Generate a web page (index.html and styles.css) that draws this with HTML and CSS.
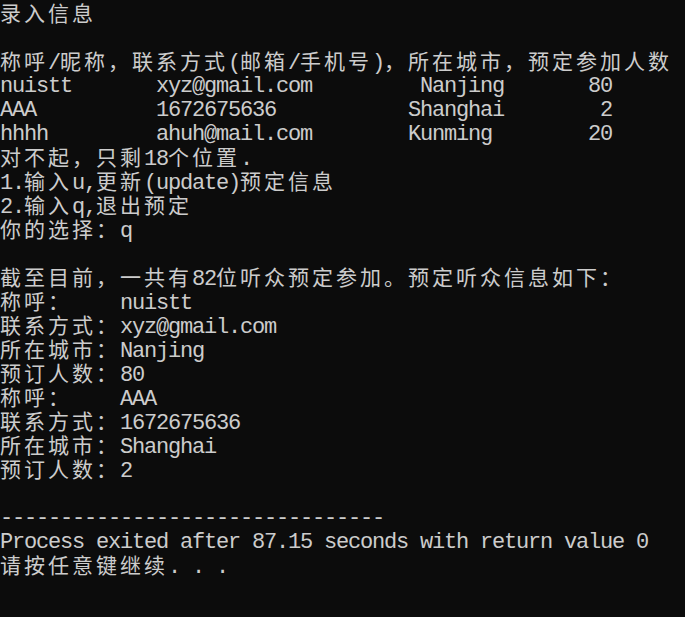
FILE: index.html
```html
<!DOCTYPE html>
<html lang="zh-CN">
<head>
<meta charset="utf-8">
<title>Console</title>
<link rel="stylesheet" href="styles.css">
</head>
<body>
<main class="console">
<div class="ln"><span class="c">录入信息</span></div>
<div class="ln"></div>
<div class="ln"><span class="c">称呼</span>/<span class="c">昵称，联系方式</span>(<span class="c">邮箱</span>/<span class="c">手机号</span>)<span class="c">，所在城市，预定参加人数</span></div>
<div class="ln">nuistt       xyz@gmail.com         Nanjing       80</div>
<div class="ln">AAA          1672675636           Shanghai        2</div>
<div class="ln">hhhh         ahuh@mail.com        Kunming        20</div>
<div class="ln"><span class="c">对不起，只剩</span>18<span class="c">个位置</span>.</div>
<div class="ln">1.<span class="c">输入</span>u,<span class="c">更新</span>(update)<span class="c">预定信息</span></div>
<div class="ln">2.<span class="c">输入</span>q,<span class="c">退出预定</span></div>
<div class="ln"><span class="c">你的选择：</span>q</div>
<div class="ln"></div>
<div class="ln"><span class="c">截至目前，一共有</span>82<span class="c">位听众预定参加。预定听众信息如下：</span></div>
<div class="ln"><span class="c">称呼：</span>    nuistt</div>
<div class="ln"><span class="c">联系方式：</span>xyz@gmail.com</div>
<div class="ln"><span class="c">所在城市：</span>Nanjing</div>
<div class="ln"><span class="c">预订人数：</span>80</div>
<div class="ln"><span class="c">称呼：</span>    AAA</div>
<div class="ln"><span class="c">联系方式：</span>1672675636</div>
<div class="ln"><span class="c">所在城市：</span>Shanghai</div>
<div class="ln"><span class="c">预订人数：</span>2</div>
<div class="ln"></div>
<div class="ln">--------------------------------</div>
<div class="ln">Process exited after 87.15 seconds with return value 0</div>
<div class="ln"><span class="c">请按任意键继续</span>. . .</div>
</main>
</body>
</html>
```
FILE: styles.css
```css
html, body {
  margin: 0;
  padding: 0;
  background: #0c0c0c;
}
body {
  width: 685px;
  height: 617px;
  overflow: hidden;
}
.console {
  display: flex;
  flex-direction: column;
  color: #cccccc;
  font-family: "Liberation Mono", monospace;
  font-size: 22px;
  letter-spacing: -1.2px;
}
.ln {
  height: 24px;
  line-height: 24px;
  white-space: pre;
  box-sizing: border-box;
  padding-top: 3px;
}
.c {
  font-family: "Noto Sans CJK SC", sans-serif;
  font-size: 21px;
  letter-spacing: 3px;
  line-height: 18px;
}
```
